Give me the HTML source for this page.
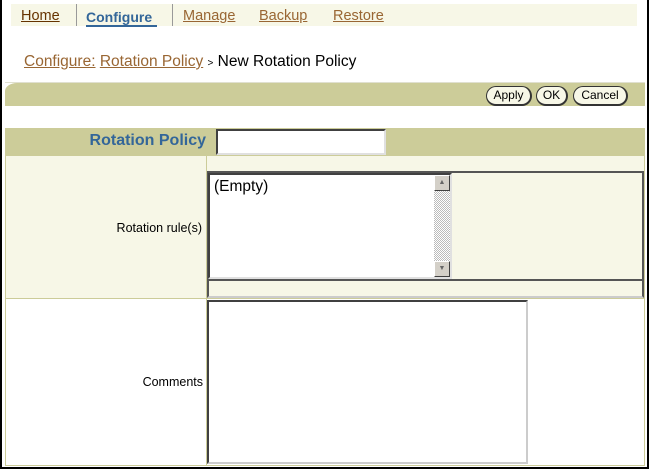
<!DOCTYPE html>
<html><head><style>
*{margin:0;padding:0;box-sizing:border-box}
body{width:649px;height:469px;position:relative;background:#fff;font-family:"Liberation Sans",Arial,sans-serif;overflow:hidden}
.a{position:absolute}
.frame{left:0;top:0;width:649px;height:469px;border:2px solid #000;border-top:none}
.tab{top:8px;font-size:14.5px;color:#663300;text-decoration:underline}
.lnk{color:#996633;text-decoration:underline}
.btn{top:86px;height:20px;border:1px solid #333;border-right:2px solid #333;border-bottom:2px solid #333;border-radius:10px;background:#f7f7e7;font-size:12px;line-height:17px;text-align:center;color:#000}
.sb{background:#d4d0c8;border:1px solid #fff;border-right-color:#404040;border-bottom-color:#404040}
</style></head><body>
<div class="a" style="left:11px;top:4px;width:626px;height:22px;background:#f7f7e7"></div>
<div class="a" style="left:76px;top:4px;width:1px;height:22px;background:#999"></div>
<div class="a" style="left:172px;top:4px;width:1px;height:22px;background:#999"></div>
<div class="a tab" style="left:21px">Home</div>
<div class="a" style="left:86px;top:9px;font-size:14px;font-weight:bold;color:#336699">Configure</div>
<div class="a" style="left:86px;top:25px;width:71px;height:2px;background:#336699"></div>
<div class="a tab lnk" style="left:183px">Manage</div>
<div class="a tab lnk" style="left:259px">Backup</div>
<div class="a tab lnk" style="left:333px">Restore</div>
<div class="a" style="left:24px;top:53px;font-size:15.5px;color:#000;white-space:nowrap"><span class="lnk">Configure:</span> <span class="lnk">Rotation Policy</span> <span style="font-size:10px">&gt;</span> New Rotation Policy</div>
<div class="a" style="left:5px;top:82px;width:640px;height:1px;background:#e0e0d0"></div>
<div class="a" style="left:5px;top:83px;width:640px;height:23px;background:#cccc99;border-top-left-radius:12px 8px"></div>
<div class="a btn" style="left:486px;width:46px">Apply</div>
<div class="a btn" style="left:536px;width:32px">OK</div>
<div class="a btn" style="left:573px;width:55px">Cancel</div>
<div class="a" style="left:5px;top:128px;width:640px;height:28px;background:#cccc99"></div>
<div class="a" style="left:5px;top:132px;width:201px;text-align:right;font-size:16px;font-weight:bold;color:#336699">Rotation Policy</div>
<div class="a" style="left:216px;top:129px;width:170px;height:26px;background:#fff;border:2px solid #404040;border-right-color:#e0e0e0;border-bottom-color:#e0e0e0"></div>
<div class="a" style="left:5px;top:156px;width:640px;height:142px;background:#f7f7e7;border-left:1px solid #cccc99;border-right:1px solid #cccc99"></div>
<div class="a" style="left:206px;top:156px;width:1px;height:309px;background:#cccc99"></div>
<div class="a" style="left:5px;top:221px;width:197px;text-align:right;font-size:12.5px">Rotation rule(s)</div>
<div class="a" style="left:207px;top:171px;width:437px;height:127px;border:2px solid #555;border-right-color:#555;border-bottom-color:#ccc"></div>
<div class="a" style="left:208px;top:173px;width:244px;height:106px;background:#fff;border:2px solid #404040;border-right-color:#e0e0e0;border-bottom-color:#e0e0e0"></div>
<div class="a" style="left:214px;top:178px;font-size:15.5px">(Empty)</div>
<div class="a" style="left:434px;top:175px;width:16px;height:102px;background:repeating-conic-gradient(#bbb 0 25%,#fff 0 50%) 0 0/2px 2px"></div>
<div class="a sb" style="left:434px;top:175px;width:16px;height:16px;font-size:7px;text-align:center;line-height:14px;color:#666">▲</div>
<div class="a sb" style="left:434px;top:261px;width:16px;height:16px;font-size:7px;text-align:center;line-height:14px;color:#666">▼</div>
<div class="a" style="left:208px;top:279px;width:435px;height:2px;background:#555"></div>
<div class="a" style="left:5px;top:298px;width:640px;height:168px;border:1px solid #cccc99"></div>
<div class="a" style="left:5px;top:375px;width:198px;text-align:right;font-size:12.5px">Comments</div>
<div class="a" style="left:207px;top:300px;width:321px;height:164px;background:#fff;border:2px solid #404040;border-right-color:#ccc;border-bottom-color:#ccc"></div>
<div class="a frame"></div>
</body></html>
